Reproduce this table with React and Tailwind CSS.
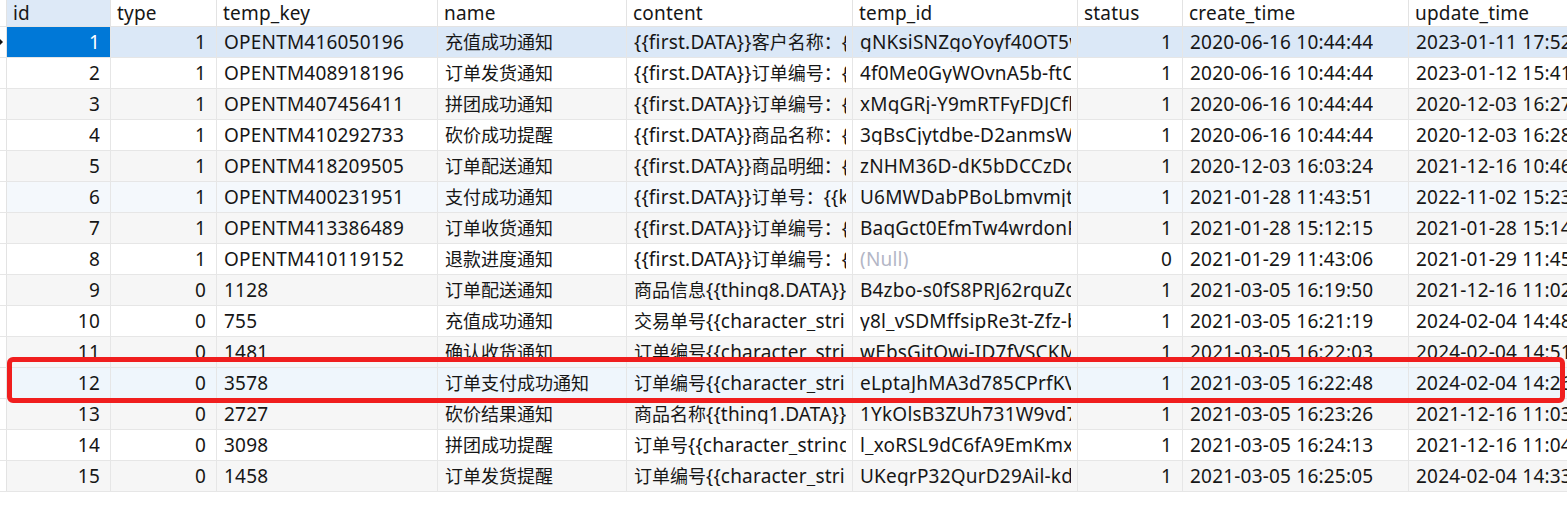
const cols = [
  { key: "id", w: "w-[104px]", right: true },
  { key: "type", w: "w-[106px]", right: true },
  { key: "temp_key", w: "w-[221px]" },
  { key: "name", w: "w-[189px]" },
  { key: "content", w: "w-[226px]" },
  { key: "temp_id", w: "w-[225px]" },
  { key: "status", w: "w-[105px]", right: true },
  { key: "create_time", w: "w-[226px]" },
  { key: "update_time", w: "w-[240px]" },
];

const rows = [
  ["1", "1", "OPENTM416050196", "充值成功通知", "{{first.DATA}}客户名称：{{keyword1.DATA}}", "gNKsiSNZgoYoyf40OT5wQkLmDx", "1", "2020-06-16 10:44:44", "2023-01-11 17:52:10"],
  ["2", "1", "OPENTM408918196", "订单发货通知", "{{first.DATA}}订单编号：{{keyword1.DATA}}", "4f0Me0GyWOvnA5b-ftCzQ1pRm", "1", "2020-06-16 10:44:44", "2023-01-12 15:41:22"],
  ["3", "1", "OPENTM407456411", "拼团成功通知", "{{first.DATA}}订单编号：{{keyword1.DATA}}", "xMgGRj-Y9mRTFyFDJCflWq3Hs", "1", "2020-06-16 10:44:44", "2020-12-03 16:27:45"],
  ["4", "1", "OPENTM410292733", "砍价成功提醒", "{{first.DATA}}商品名称：{{keyword1.DATA}}", "3gBsCjytdbe-D2anmsW_yT8k", "1", "2020-06-16 10:44:44", "2020-12-03 16:28:03"],
  ["5", "1", "OPENTM418209505", "订单配送通知", "{{first.DATA}}商品明细：{{keyword1.DATA}}", "zNHM36D-dK5bDCCzDcXvR2a", "1", "2020-12-03 16:03:24", "2021-12-16 10:46:31"],
  ["6", "1", "OPENTM400231951", "支付成功通知", "{{first.DATA}}订单号：{{keyword1.DATA}}", "U6MWDabPBoLbmvmjtrQe4sN", "1", "2021-01-28 11:43:51", "2022-11-02 15:23:09"],
  ["7", "1", "OPENTM413386489", "订单收货通知", "{{first.DATA}}订单编号：{{keyword1.DATA}}", "BaqGct0EfmTw4wrdonPgL7x", "1", "2021-01-28 15:12:15", "2021-01-28 15:14:02"],
  ["8", "1", "OPENTM410119152", "退款进度通知", "{{first.DATA}}订单编号：{{keyword1.DATA}}", null, "0", "2021-01-29 11:43:06", "2021-01-29 11:45:19"],
  ["9", "0", "1128", "订单配送通知", "商品信息{{thing8.DATA}}订单编号", "B4zbo-s0fS8PRJ62rquZdMn4", "1", "2021-03-05 16:19:50", "2021-12-16 11:02:33"],
  ["10", "0", "755", "充值成功通知", "交易单号{{character_string1.DATA}}", "y8l_vSDMffsipRe3t-Zfz-bHq", "1", "2021-03-05 16:21:19", "2024-02-04 14:48:12"],
  ["11", "0", "1481", "确认收货通知", "订单编号{{character_string1.DATA}}", "wEbsGitOwi-ID7fVSCKMa9Lp", "1", "2021-03-05 16:22:03", "2024-02-04 14:51:40"],
  ["12", "0", "3578", "订单支付成功通知", "订单编号{{character_string1.DATA}}", "eLptaJhMA3d785CPrfKVs2Wc", "1", "2021-03-05 16:22:48", "2024-02-04 14:26:55"],
  ["13", "0", "2727", "砍价结果通知", "商品名称{{thing1.DATA}}原价", "1YkOlsB3ZUh731W9vd7Gx5q", "1", "2021-03-05 16:23:26", "2021-12-16 11:03:17"],
  ["14", "0", "3098", "拼团成功提醒", "订单号{{character_string1.DATA}}", "l_xoRSL9dC6fA9EmKmxWt3Yb", "1", "2021-03-05 16:24:13", "2021-12-16 11:04:28"],
  ["15", "0", "1458", "订单发货提醒", "订单编号{{character_string1.DATA}}", "UKegrP32QurD29Ail-kdlPz0", "1", "2021-03-05 16:25:05", "2024-02-04 14:33:41"],
];

// CJK glyphs render a bit smaller than the latin ones in the original grid
function Txt({ s }) {
  const parts = s.split(/([\u3000-\u303f\u4e00-\u9fff\uff00-\uffef]+)/);
  return parts.map((p, i) =>
    i % 2 === 1 ? (
      <span key={i} className="text-[18px] tracking-normal">{p}</span>
    ) : (
      p
    )
  );
}

function rowBg(i) {
  if (i === 0) return "bg-[#dbe8f7]";
  if (i === 11) return "bg-[#eff6fc]";
  if (i === 5) return "bg-[#f4f8fc]";
  return i % 2 === 0 ? "bg-[#f6f6f6]" : "bg-white";
}

export default function App() {
  return (
    <div
      className="relative w-[1567px] h-[513px] overflow-hidden bg-white text-[#161616] text-[19px] tracking-[0.2px]"
      style={{ fontFamily: '"Noto Sans", "Noto Sans CJK SC", sans-serif' }}
    >
      {/* header */}
      <div className="flex h-[27px] border-b border-[#e3e3e3] leading-none">
        <div className="w-[7px] shrink-0 border-r border-[#e3e3e3]" />
        {cols.map((c, ci) => (
          <div
            key={c.key}
            className={`${c.w} shrink-0 flex items-center pl-[6px] border-r border-[#e3e3e3] ${
              ci === 0 ? "bg-[#dde9f7]" : "bg-white"
            }`}
          >
            {c.key}
          </div>
        ))}
      </div>

      {/* rows */}
      {rows.map((r, ri) => (
        <div key={ri} className={`flex h-[31px] border-b border-[#e6e6e6] leading-none ${rowBg(ri)}`}>
          <div className="w-[7px] shrink-0 border-r border-[#e3e3e3] bg-white flex items-center">
            {ri === 0 && (
              <svg width="4" height="8" viewBox="0 0 4 8" className="-ml-[1px]">
                <path d="M0 0 L4 4 L0 8 Z" fill="#111" />
              </svg>
            )}
          </div>
          {cols.map((c, ci) => {
            const v = r[ci];
            const sel = ri === 0 && ci === 0;
            return (
              <div
                key={c.key}
                className={`${c.w} shrink-0 flex items-center border-r border-[#e6e6e6] ${
                  c.right ? "justify-end pr-[10px]" : "pl-[7px] pr-[6px]"
                } ${sel ? "bg-[#0078d7] text-white" : ""}`}
              >
                <div className="overflow-hidden whitespace-nowrap">
                  {v === null ? (
                    <span className="text-[#b3b6c6]">(Null)</span>
                  ) : (
                    <Txt s={v} />
                  )}
                </div>
              </div>
            );
          })}
        </div>
      ))}

      {/* red annotation box around row 12 */}
      <div className="absolute left-[7px] top-[357px] w-[1558px] h-[46px] border-[5px] border-[#f01e1e] rounded-[6px] pointer-events-none" />
    </div>
  );
}
